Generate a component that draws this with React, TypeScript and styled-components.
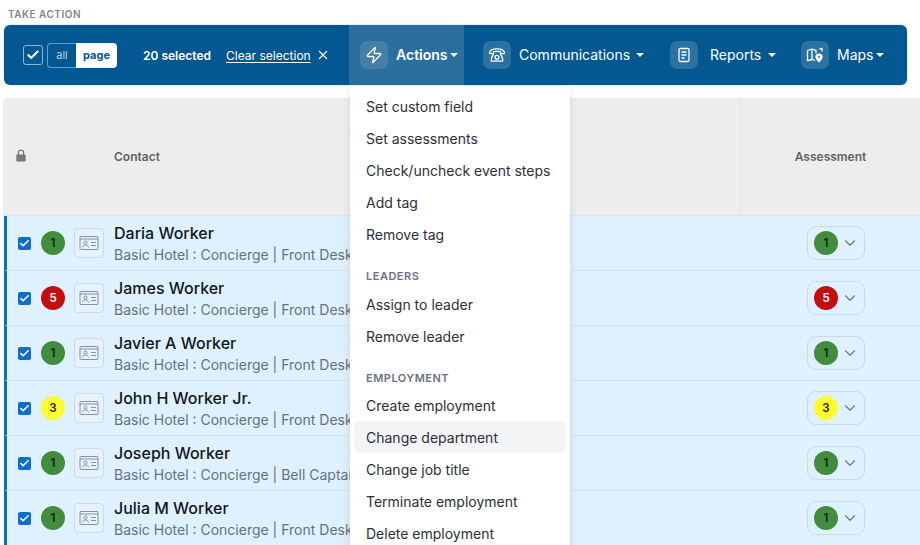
import React from "react";
import styled, { createGlobalStyle } from "styled-components";
import { Zap, Check, X, ChevronDown } from "lucide-react";

const Global = createGlobalStyle`
  html, body { margin: 0; padding: 0; background: #fff; }
  body { width: 920px; height: 545px; overflow: hidden; font-family: Inter, "Liberation Sans", sans-serif; }
`;
const Page = styled.div`width: 920px; height: 545px; overflow: hidden; position: relative;`;
const Heading = styled.div`
  height: 25px; padding: 8px 0 0 8px; box-sizing: border-box;
  font-size: 10px; line-height: 12px; font-weight: 600; letter-spacing: .5px; color: #80848a;
`;
const Bar = styled.div`
  width: 903px; height: 60px; margin-left: 4px; box-sizing: border-box; background: #035891;
  border-radius: 6px; display: flex; align-items: stretch; padding-left: 19px; color: #fff;
  box-shadow: 0 0 0 .5px #cfe8f8;
`;
const SelectArea = styled.div`display: flex; align-items: center; width: 326px; flex: none;`;
const BarCheck = styled.span`
  width: 18px; height: 18px; border: 1px solid #8fb7d2; border-radius: 3px; display: flex;
  align-items: center; justify-content: center; margin-right: 4px;
`;
const Toggle = styled.div`display: flex; height: 25px; width: 70px; margin-right: 26px;`;
const ToggleOpt = styled.span<{ $on?: boolean }>`
  flex: ${p => (p.$on ? "1" : "0 0 28px")}; display: flex; align-items: center; justify-content: center;
  font-size: 11px; font-weight: ${p => (p.$on ? 700 : 400)};
  background: ${p => (p.$on ? "#fff" : "transparent")}; color: ${p => (p.$on ? "#035891" : "#bcd3e3")};
  border: ${p => (p.$on ? "none" : "1px solid #6f9fc0")}; border-right: none;
  border-radius: ${p => (p.$on ? "0 4px 4px 0" : "4px 0 0 4px")};
`;
const Selected = styled.span`font-size: 12px; font-weight: 600; margin-right: 15px;`;
const ClearLink = styled.a`font-size: 12px; color: #fff; text-decoration: underline; text-underline-offset: 2px; margin-right: 5px;`;
const MenuItem = styled.div<{ $open?: boolean; $w: number; $gap: number }>`
  position: relative; flex: none; width: ${p => p.$w}px; box-sizing: border-box; padding-left: 11px;
  display: flex; align-items: center; gap: 8px; font-size: 14px;
  font-weight: ${p => (p.$open ? 600 : 400)};
  background: ${p => (p.$open ? "#2b6f9f" : "transparent")};
  margin-right: ${p => p.$gap}px;
`;
const MenuLabel = styled.span<{ $indent?: number }>`
  padding-bottom: 2px; margin-left: ${p => p.$indent ?? 0}px;
`;
const IconTile = styled.span<{ $open?: boolean }>`
  width: 28px; height: 28px; border-radius: 7px; background: ${p => (p.$open ? "#457fa9" : "#2c72a1")}; display: flex;
  align-items: center; justify-content: center; flex: none;
`;
const Caret = styled.span<{ $gap: number }>`
  width: 0; height: 0; border-left: 4px solid transparent; border-right: 4px solid transparent;
  border-top: 4px solid #fff; margin-left: ${p => p.$gap}px;
`;
const Dropdown = styled.div`
  position: absolute; top: 61px; left: 1px; width: 220px; height: 470px; background: #fff;
  border-radius: 6px; box-shadow: 0 2px 8px rgba(0,0,0,.12); padding: 4px; box-sizing: border-box;
  color: #2b3038; font-weight: 400; z-index: 5;
`;
const DropItem = styled.div<{ $hover?: boolean }>`
  height: 32px; display: flex; align-items: center; padding-left: 12px; font-size: 14px; border-radius: 6px;
  background: ${p => (p.$hover ? "#f3f4f6" : "transparent")};
`;
const DropLabel = styled.div<{ $top: number; $bottom: number }>`
  height: 12px; margin: ${p => p.$top}px 0 ${p => p.$bottom}px; padding-left: 12px; font-size: 11px; line-height: 12px;
  font-weight: 600; letter-spacing: .5px; color: #6b7280;
`;
const Table = styled.div`margin: 13px 0 0 3px; width: 917px;`;
const HeadRow = styled.div`
  height: 118px; background: #ededed; border-radius: 5px 0 0 0; display: grid;
  grid-template-columns: 111px 626px 1fr; border-bottom: 1px solid #e2e2e2; box-sizing: border-box;
  color: #5f6368; font-size: 12px; font-weight: 600;
`;
const HeadCell = styled.div<{ $center?: boolean; $rule?: boolean }>`
  padding-top: 52px; line-height: 14px; box-sizing: border-box;
  text-align: ${p => (p.$center ? "center" : "left")};
  border-left: ${p => (p.$rule ? "1px solid #e2e2e2" : "none")};
`;
const LockCell = styled(HeadCell)`padding: 51px 0 0 13px;`;
const Row = styled.div`
  height: 55px; box-sizing: border-box; margin-left: 1px; background: #dff1fe;
  border-left: 3px solid #0a73ad; border-bottom: 1px solid #cfe4f3;
  display: grid; grid-template-columns: 107px 626px 1fr; align-items: center;
`;
const Left = styled.div`display: flex; align-items: center; padding-left: 11px; gap: 6px;`;
const Box = styled.span`
  width: 13px; height: 13px; border-radius: 2px; background: #0f6cd0; display: flex; align-items: center;
  justify-content: center; margin-right: 4px;
`;
const Badge = styled.span<{ $c: string; $t: string }>`
  width: 24px; height: 24px; border-radius: 50%; background: ${p => p.$c}; color: ${p => p.$t};
  font-size: 11.5px; font-weight: 600; display: flex; align-items: center; justify-content: center; flex: none;
`;
const CardBtn = styled.span`
  width: 30px; height: 30px; border-radius: 4px; border: 1px solid #cfdbe4; box-sizing: border-box;
  background: #e6f2fb; display: flex; align-items: center; justify-content: center; margin-left: 3px;
`;
const Who = styled.div`padding-top: 2px;`;
const Name = styled.div`font-size: 16px; line-height: 22px; font-weight: 500; color: #12161c;`;
const Sub = styled.div`font-size: 14px; line-height: 22px; color: #65717d; white-space: nowrap;`;
const AssessCell = styled.div`display: flex; justify-content: center; padding-left: 12px;`;
const Assess = styled.div`
  width: 58px; height: 34px; box-sizing: border-box; border: 1px solid #c9d9e5; border-radius: 9px;
  display: flex; align-items: center; padding-left: 6px; gap: 3px; color: #6b7280;
`;

const people: [string, number, string][] = [
  ["Daria Worker", 1, "Front Desk"],
  ["James Worker", 5, "Front Desk"],
  ["Javier A Worker", 1, "Front Desk"],
  ["John H Worker Jr.", 3, "Front Desk"],
  ["Joseph Worker", 1, "Bell Captain"],
  ["Julia M Worker", 1, "Front Desk"],
];
const tone = (n: number) =>
  n === 1 ? { c: "#428c3e", t: "#10240f" } : n === 5 ? { c: "#c40f0f", t: "#fff" } : { c: "#fbfb2d", t: "#222" };

const LockIcon = () => (
  <svg width="10" height="13" viewBox="0 0 10 13" fill="none">
    <path d="M2.400 6V3.800a2.600 2.600 0 0 1 5.200 0V6" stroke="#77797c" strokeWidth="1.300" />
    <rect x=".3" y="5.400" width="9.400" height="7.200" rx="1" fill="#77797c" />
  </svg>
);
const PhoneIcon = () => (
  <svg width="18" height="18" viewBox="0 0 18 18" fill="none" stroke="#fff" strokeWidth="1.3" strokeLinejoin="round">
    <path d="M1.500 6.500C2 4 5 2.800 9 2.800S16 4 16.500 6.500c.1.800-.3 1.200-1 1.200h-2c-.6 0-.9-.4-.9-1V5.600C11.500 5.200 6.500 5.200 5.400 5.600v1.100c0 .6-.3 1-.9 1h-2c-.7 0-1.100-.4-1-1.200z" />
    <path d="M5.800 7.400 3.400 12.500v2.700h11.200v-2.700L12.200 7.400" />
    <circle cx="9" cy="11.300" r="1.900" />
  </svg>
);
const ReportIcon = () => (
  <svg width="14" height="16" viewBox="0 0 14 16" fill="none" stroke="#fff" strokeWidth="1.3">
    <rect x="2" y="1.500" width="10" height="13" rx="1.500" />
    <path d="M4.500 5h5M4.500 8h5M4.500 11h3" />
  </svg>
);
const MapIcon = () => (
  <svg width="18" height="18" viewBox="0 0 18 18" fill="none" stroke="#fff" strokeWidth="1.3" strokeLinejoin="round">
    <path d="M1.500 4.500 6 3l4 1.300v3M6 3v10.500M1.500 4.500v10.200L6 13.500l3 1M13.500 3l2.500-.5v3" />
    <path d="M13 15.800s-3-2.600-3-4.700a3 3 0 0 1 6 0c0 2.100-3 4.700-3 4.700z" fill="#fff" />
    <circle cx="13" cy="11" r="1" fill="#2c72a1" stroke="none" />
  </svg>
);
const CardIcon = () => (
  <svg width="20" height="16" viewBox="0 0 20 16" fill="none" stroke="#7d8791" strokeWidth=".9">
    <rect x="1" y="1.500" width="18" height="13" rx="1" />
    <path d="M1 4h18" />
    <circle cx="6.500" cy="7.600" r="1.600" />
    <path d="M3.500 12.400c.3-1.800 1.500-2.400 3-2.400s2.700.6 3 2.400M12 7.500h5M12 10.500h5" />
  </svg>
);

export default function App() {
  return (
    <Page>
      <Global />
      <Heading>TAKE ACTION</Heading>
      <Bar>
        <SelectArea>
          <BarCheck><Check size={14} strokeWidth={3.5} color="#fff" /></BarCheck>
          <Toggle>
            <ToggleOpt>all</ToggleOpt>
            <ToggleOpt $on>page</ToggleOpt>
          </Toggle>
          <Selected>20 selected</Selected>
          <ClearLink>Clear selection</ClearLink>
          <X size={14} strokeWidth={2.2} color="#fff" />
        </SelectArea>
        <MenuItem $open $w={115} $gap={8}>
          <IconTile $open><Zap size={18} strokeWidth={1.7} color="#fff" /></IconTile>
          <MenuLabel>Actions</MenuLabel><Caret $gap={-6} />
          <Dropdown>
            <DropItem>Set custom field</DropItem>
            <DropItem>Set assessments</DropItem>
            <DropItem>Check/uncheck event steps</DropItem>
            <DropItem>Add tag</DropItem>
            <DropItem>Remove tag</DropItem>
            <DropLabel $top={20} $bottom={6.5}>LEADERS</DropLabel>
            <DropItem>Assign to leader</DropItem>
            <DropItem>Remove leader</DropItem>
            <DropLabel $top={19} $bottom={5.5}>EMPLOYMENT</DropLabel>
            <DropItem>Create employment</DropItem>
            <DropItem $hover>Change department</DropItem>
            <DropItem>Change job title</DropItem>
            <DropItem>Terminate employment</DropItem>
            <DropItem>Delete employment</DropItem>
          </Dropdown>
        </MenuItem>
        <MenuItem $w={187} $gap={0}>
          <IconTile><PhoneIcon /></IconTile>
          <MenuLabel>Communications</MenuLabel><Caret $gap={-2} />
        </MenuItem>
        <MenuItem $w={131} $gap={0}>
          <IconTile><ReportIcon /></IconTile>
          <MenuLabel $indent={4}>Reports</MenuLabel><Caret $gap={-1} />
        </MenuItem>
        <MenuItem $w={100} $gap={0}>
          <IconTile><MapIcon /></IconTile>
          <MenuLabel>Maps</MenuLabel><Caret $gap={-5} />
        </MenuItem>
      </Bar>
      <Table>
        <HeadRow>
          <LockCell><LockIcon /></LockCell>
          <HeadCell>Contact</HeadCell>
          <HeadCell $center $rule>Assessment</HeadCell>
        </HeadRow>
        {people.map(([name, n, dept]) => {
          const t = tone(n);
          return (
            <Row key={name}>
              <Left>
                <Box><Check size={11} strokeWidth={3.5} color="#fff" /></Box>
                <Badge $c={t.c} $t={t.t}>{n}</Badge>
                <CardBtn><CardIcon /></CardBtn>
              </Left>
              <Who>
                <Name>{name}</Name>
                <Sub>Basic Hotel : Concierge | {dept}</Sub>
              </Who>
              <AssessCell>
                <Assess>
                  <Badge $c={t.c} $t={t.t}>{n}</Badge>
                  <ChevronDown size={18} strokeWidth={1.5} />
                </Assess>
              </AssessCell>
            </Row>
          );
        })}
      </Table>
    </Page>
  );
}
